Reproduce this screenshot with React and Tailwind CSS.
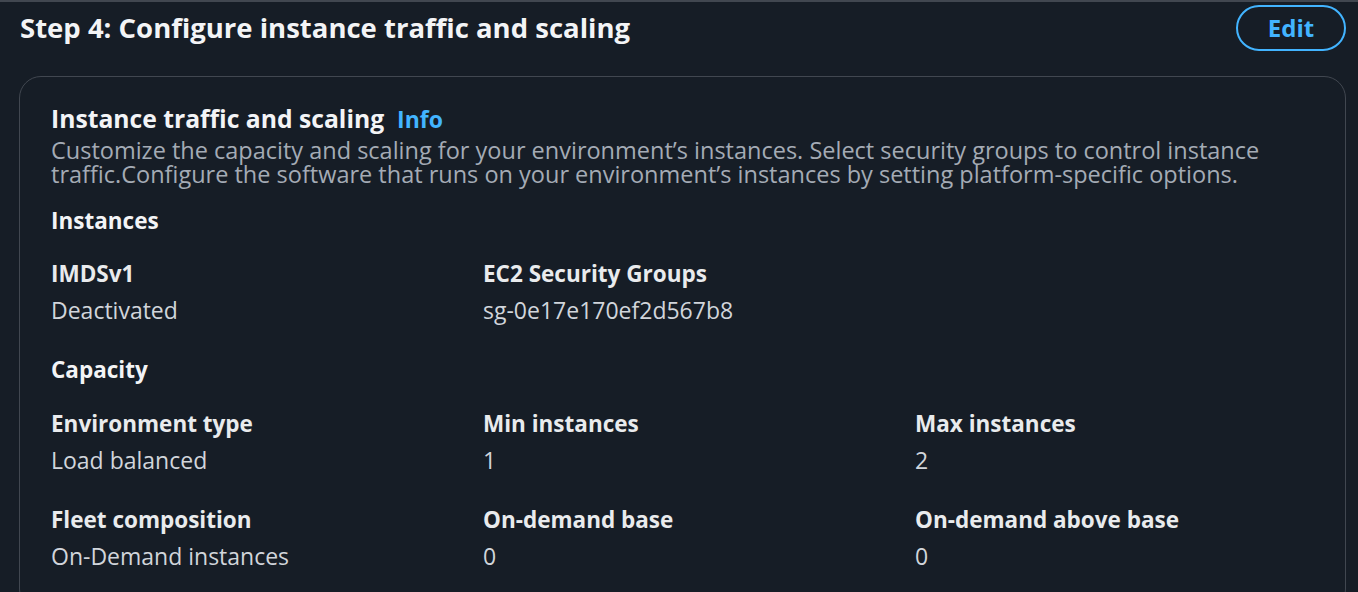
export default function App() {
  const font = { fontFamily: '"Open Sans", "Noto Sans", sans-serif' };
  const Item = ({ label, value }) => (
    <div className="flex flex-col">
      <div className="text-[22.5px] font-bold leading-[28px] text-[#e9ebed]">{label}</div>
      <div className="mt-[8px] text-[23px] leading-[28px] text-[#d1d5db]">{value}</div>
    </div>
  );
  return (
    <div className="w-[1358px] h-[592px] overflow-hidden bg-[#161d26] border-t-2 border-[#414750]" style={font}>
      <div className="flex items-center justify-between pl-[20px] pr-[12px] pt-[3px]">
        <h2 className="text-[27.5px] font-bold leading-[46px] text-[#f3f4f6]">Step 4: Configure instance traffic and scaling</h2>
        <button className="h-[46px] w-[110px] rounded-full border-2 border-[#42b4ff] text-[24px] font-bold text-[#42b4ff]">Edit</button>
      </div>
      <div className="ml-[19px] mr-[12px] mt-[25px] rounded-[22px] border border-[#414750] px-[31px] pt-[25px] pb-[40px]">
        <div className="flex items-baseline gap-[13px]">
          <span className="text-[24.7px] font-bold leading-[32px] text-[#f3f4f6]">Instance traffic and scaling</span>
          <span className="text-[23px] font-bold text-[#42b4ff]">Info</span>
        </div>
        <p className="mt-[1px] text-[23.5px] leading-[24px] text-[#a4abb5]">
          Customize the capacity and scaling for your environment’s instances. Select security groups to control instance traffic.Configure the software that runs on your environment’s instances by setting platform-specific options.
        </p>
        <div className="mt-[21px] text-[22.5px] font-bold leading-[28px] text-[#f3f4f6]">Instances</div>
        <div className="mt-[25px] grid grid-cols-[432px_432px_1fr]">
          <Item label="IMDSv1" value="Deactivated" />
          <Item label="EC2 Security Groups" value="sg-0e17e170ef2d567b8" />
        </div>
        <div className="mt-[32px] text-[22.5px] font-bold leading-[28px] text-[#f3f4f6]">Capacity</div>
        <div className="mt-[26px] grid grid-cols-[432px_432px_1fr] gap-y-[32px]">
          <Item label="Environment type" value="Load balanced" />
          <Item label="Min instances" value="1" />
          <Item label="Max instances" value="2" />
          <Item label="Fleet composition" value="On-Demand instances" />
          <Item label="On-demand base" value="0" />
          <Item label="On-demand above base" value="0" />
        </div>
      </div>
    </div>
  );
}
